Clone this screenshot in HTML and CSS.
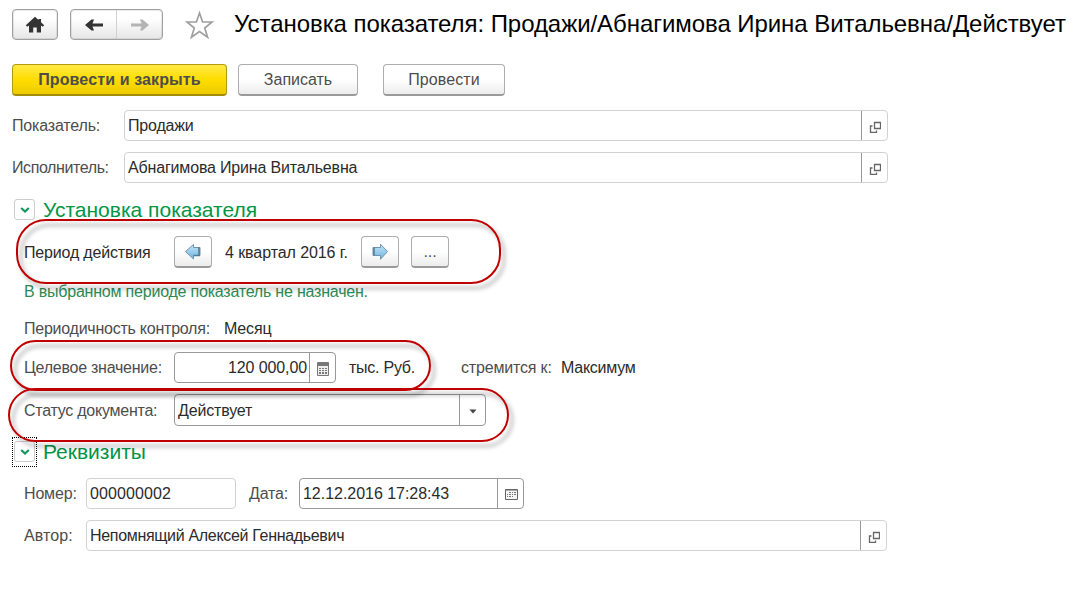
FILE: index.html
```html
<!DOCTYPE html>
<html lang="ru">
<head>
<meta charset="utf-8">
<title>Установка показателя</title>
<link rel="stylesheet" href="styles.css">
</head>
<body>
<svg class="defs" aria-hidden="true">
  <defs>
    <linearGradient id="blue" x1="0" y1="0" x2="0" y2="1"><stop offset="0" stop-color="#c2e6f8"/><stop offset="1" stop-color="#6fb4e0"/></linearGradient>
    <symbol id="open" viewBox="0 0 12 12"><path d="M5.500 1.500h6v6h-6zM3.500 5h-2v6.500h6V9.500" fill="none" stroke="#666" stroke-width="1.300"/></symbol>
    <symbol id="chev" viewBox="0 0 10 8"><path d="M1.200 2 5 5.500 8.800 2" fill="none" stroke="#12975a" stroke-width="2.200"/></symbol>
  </defs>
</svg>
<main class="form">
  <header class="topbar">
    <button class="btn home"><svg width="20" height="18" viewBox="0 0 20 18"><path d="M10 .8.800 9.200l1.400 1.500L4 9.400V16.500h4.200v-5h3.600v5H16V9.400l1.800 1.300 1.400-1.500L16 6.300V3h-2.500v1z" fill="#333"/></svg></button>
    <div class="btn nav">
      <span class="nav-part back"><svg width="20" height="14" viewBox="0 0 20 14"><path d="M19 5.500v3H8.500L10 12.500H7.500L1 7l6.500-5.500H10L8.500 5.500z" fill="#333"/></svg></span>
      <span class="nav-part"><svg width="20" height="14" viewBox="0 0 20 14"><path d="M1 5.500v3h10.500L10 12.500h2.500L19 7l-6.500-5.500H10l1.500 4z" fill="#b4b4b4"/></svg></span>
    </div>
    <svg class="star" width="30" height="28" viewBox="0 0 30 28"><path d="M14.500 2l3.100 9H27l-7.300 6 2.900 9.300-8.100-5.700-8.100 5.700L9.300 17 2 11h9.400z" fill="#fff" stroke="#a0a0a0" stroke-width="1.700"/></svg>
    <h1 class="title">Установка показателя: Продажи/Абнагимова Ирина Витальевна/Действует</h1>
  </header>
  <div class="commands">
    <button class="btn primary">Провести и закрыть</button>
    <button class="btn save">Записать</button>
    <button class="btn post">Провести</button>
  </div>
  <div class="row top-field"><span class="label top-label">Показатель:</span><div class="field wide"><span class="value">Продажи</span><span class="pick"><svg width="12" height="12"><use href="#open"/></svg></span></div></div>
  <div class="row top-field"><span class="label top-label executor">Исполнитель:</span><div class="field wide"><span class="value">Абнагимова Ирина Витальевна</span><span class="pick"><svg width="12" height="12"><use href="#open"/></svg></span></div></div>

  <div class="section first"><span class="toggle"><svg width="10" height="8"><use href="#chev"/></svg></span><h2 class="heading">Установка показателя</h2></div>
  <div class="row period">
    <span class="dark period-label">Период действия</span>
    <button class="btn small prev"><svg width="18" height="18" viewBox="0 0 18 18"><path d="M1.500 8.500 9.500 1.500V4.500h6.500v8H9.500v3.500z" fill="url(#blue)" stroke="#7193ac"/><path d="M15 4.500v8M9.500 12.500H16" stroke="#557b96" stroke-width="1.600"/></svg></button>
    <span class="dark quarter">4 квартал 2016 г.</span>
    <button class="btn small next"><svg width="18" height="18" viewBox="0 0 18 18"><path d="M16.500 8.500 9.500 1.200V4.500H2v8h7.500v3.800z" fill="url(#blue)" stroke="#7193ac"/><path d="M3 4.500v8" stroke="#557b96" stroke-width="1.600"/></svg></button>
    <button class="btn small dots">...</button>
  </div>
  <p class="notice">В выбранном периоде показатель не назначен.</p>
  <div class="row control"><span class="label control-label">Периодичность контроля:</span><span class="dark">Месяц</span></div>
  <div class="row target">
    <span class="label inner-label">Целевое значение:</span>
    <div class="field strong amount"><span class="value right">120 000,00</span><span class="pick"><svg width="12" height="14" viewBox="0 0 12 14"><path d="M.5.500h11v13H.5z" fill="#eee" stroke="#777"/><path d="M1 1h10v3H1z" fill="#777"/><path d="M2 6h2v1H2zm3 0h2v1H5zm3 0h2v1H8zM2 8h2v1H2zm3 0h2v1H5zm3 0h2v1H8zM2 10h2v2H2zm3 0h2v2H5zm3 0h2v2H8z" fill="#777"/></svg></span></div>
    <span class="dark unit">тыс. Руб.</span>
    <span class="label aim">стремится к:</span>
    <span class="dark max">Максимум</span>
  </div>
  <div class="row status">
    <span class="label inner-label">Статус документа:</span>
    <div class="field strong state"><span class="value">Действует</span><span class="pick"><svg width="8" height="5" viewBox="0 0 8 5"><path d="M.5.500h7L4 4.500z" fill="#444"/></svg></span></div>
  </div>
  <div class="section second"><span class="toggle focused"><svg width="10" height="8"><use href="#chev"/></svg></span><h2 class="heading">Реквизиты</h2></div>
  <div class="row doc">
    <span class="label doc-label">Номер:</span>
    <div class="field number"><span class="value">000000002</span></div>
    <span class="label date-label">Дата:</span>
    <div class="field strong date"><span class="value">12.12.2016 17:28:43</span><span class="pick"><svg width="13" height="11" viewBox="0 0 13 11"><path d="M.5.500h12v10H.5z" fill="#f5f5f5" stroke="#666"/><path d="M1 1h11v1H1z" fill="#aaa"/><path d="M4 3h2v1H4zm3 0h1v1H7zm2 0h2v1H9zM2 5h1v1H2zm2 0h2v1H4zm3 0h1v1H7zm2 0h2v1H9zM2 7h1v1H2zm2 0h2v1H4zm3 0h1v1H7z" fill="#777"/></svg></span></div>
  </div>
  <div class="row author"><span class="label doc-label">Автор:</span><div class="field writer"><span class="value">Непомнящий Алексей Геннадьевич</span><span class="pick"><svg width="12" height="12"><use href="#open"/></svg></span></div></div>

  <div class="mark mark-period"></div>
  <div class="mark mark-target"></div>
  <div class="mark mark-status"></div>
</main>
</body>
</html>
```
FILE: styles.css
```css
* { box-sizing: border-box; }
body { margin: 0; background: #fff; font: 16px/20px "Liberation Sans", Arial, sans-serif; letter-spacing: -0.17px; color: #2b2b2b; }
button { font: inherit; letter-spacing: inherit; padding: 0; }
svg { display: block; flex: none; }
.defs { position: absolute; width: 0; height: 0; }
.form { position: relative; width: 1089px; height: 596px; padding: 9px 0 0 12px; overflow: hidden; white-space: nowrap; }
.topbar { display: flex; height: 31px; }
.btn { display: flex; align-items: center; justify-content: center; flex: none; height: 32px; border: 1px solid #adadad; border-bottom: 2px solid #9a9a9a; border-radius: 4px; background: linear-gradient(#fff 50%, #ececec); color: #4d4d4d; }
.topbar .btn { height: 31px; border: 1px solid #a0a0a0; background: linear-gradient(#fff 30%, #e6e6e6); box-shadow: inset 0 0 0 1px rgba(0, 0, 0, .08); }
.home { width: 46px; margin-right: 12px; }
.nav { width: 93px; }
.nav-part { display: flex; flex: 1; height: 100%; align-items: center; justify-content: center; }
.back { border-right: 1px solid #d0d0d0; }
.star { margin: 2px 0 0 22px; }
.title { margin: 0 0 0 19px; font-size: 24px; line-height: 29px; font-weight: 400; letter-spacing: -0.06px; color: #000; }
.commands { display: flex; height: 32px; margin-top: 24px; }
.btn.primary { width: 215px; margin-right: 11px; border-color: #b39b10; border-bottom-color: #a28c0a; background: linear-gradient(#ffe947, #fd0 50%, #edcb00); font-weight: 700; letter-spacing: 0.12px; }
.save { width: 120px; margin-right: 25px; letter-spacing: 0; }
.post { width: 122px; letter-spacing: 0.1px; }
.row { display: flex; align-items: center; height: 31px; }
.label, .dark { flex: none; }
.label { color: #4d4d4d; }
.dark { color: #2b2b2b; }
.top-field { margin-top: 11px; }
.commands + .top-field { margin-top: 14px; }
.top-label { width: 112px; }
.executor { letter-spacing: -0.4px; }
.field { display: flex; flex: none; height: 31px; border: 1px solid #d2d2d2; border-radius: 4px; background: #fff; }
.value { flex: 1; padding-left: 3px; line-height: 30px; }
.right { text-align: right; padding-right: 2px; letter-spacing: -0.1px; }
.pick { display: flex; width: 26px; padding-left: 1px; align-items: center; justify-content: center; border-left: 1px solid #999; }
.pick svg { margin-top: 2px; }
.strong { border-color: #999; }
.wide { width: 764px; }
.section { display: flex; align-items: center; height: 21px; padding-left: 2px; }
.first { margin-top: 16px; }
.toggle { position: relative; display: flex; align-items: center; justify-content: center; width: 21px; height: 21px; border: 1px solid #ccc; border-radius: 3px; }
.focused::after { content: ""; position: absolute; inset: -5px -3px -6px; border: 1px dotted #000; }
.heading { margin: 0 0 0 8px; font-size: 21px; line-height: 24px; font-weight: 400; letter-spacing: 0; color: #009646; }
.period { height: 32px; margin-top: 16px; padding-left: 12px; }
.period-label { width: 150px; }
.period .dark { padding-top: 1px; }
.small { width: 38px; }
.prev { margin-right: 13px; }
.quarter { width: 136px; letter-spacing: -0.08px; }
.next { margin-right: 12px; }
.dots { color: #2f5f86; }
.notice { margin: 14px 0 0 12px; color: #2e8b57; letter-spacing: -0.21px; }
.control { height: 20px; margin-top: 17px; padding-left: 12px; }
.control-label { width: 200px; letter-spacing: -0.24px; }
.target { margin-top: 13px; padding-left: 12px; }
.inner-label { width: 150px; letter-spacing: -0.25px; }
.amount { width: 162px; margin-right: 13px; }
.unit { width: 112px; letter-spacing: -0.25px; }
.aim { width: 100px; }
.max { letter-spacing: -0.25px; }
.status { height: 32px; margin-top: 11px; padding-left: 12px; }
.status .inner-label { padding-top: 1px; }
.state { width: 312px; height: 32px; }
.state .value { line-height: 31px; }
.second { margin-top: 15px; }
.doc { margin-top: 16px; padding-left: 12px; }
.doc-label { width: 62px; }
.number { width: 150px; margin-right: 13px; letter-spacing: 0.1px; }
.date-label { width: 50px; }
.date { width: 225px; letter-spacing: -0.03px; }
.author { margin-top: 11px; padding-left: 12px; }
.author .doc-label { letter-spacing: 0.1px; }
.writer { width: 801px; letter-spacing: -0.32px; }
.mark { position: absolute; border: 2px solid #c00000; border-radius: 30px; filter: drop-shadow(4px 5px 2px rgba(0, 0, 0, .36)); pointer-events: none; }
.mark-period { left: 16px; top: 219px; width: 485px; height: 65px; }
.mark-target { left: 10px; top: 340px; width: 421px; height: 51px; }
.mark-status { left: 8px; top: 388px; width: 501px; height: 54px; }
```
